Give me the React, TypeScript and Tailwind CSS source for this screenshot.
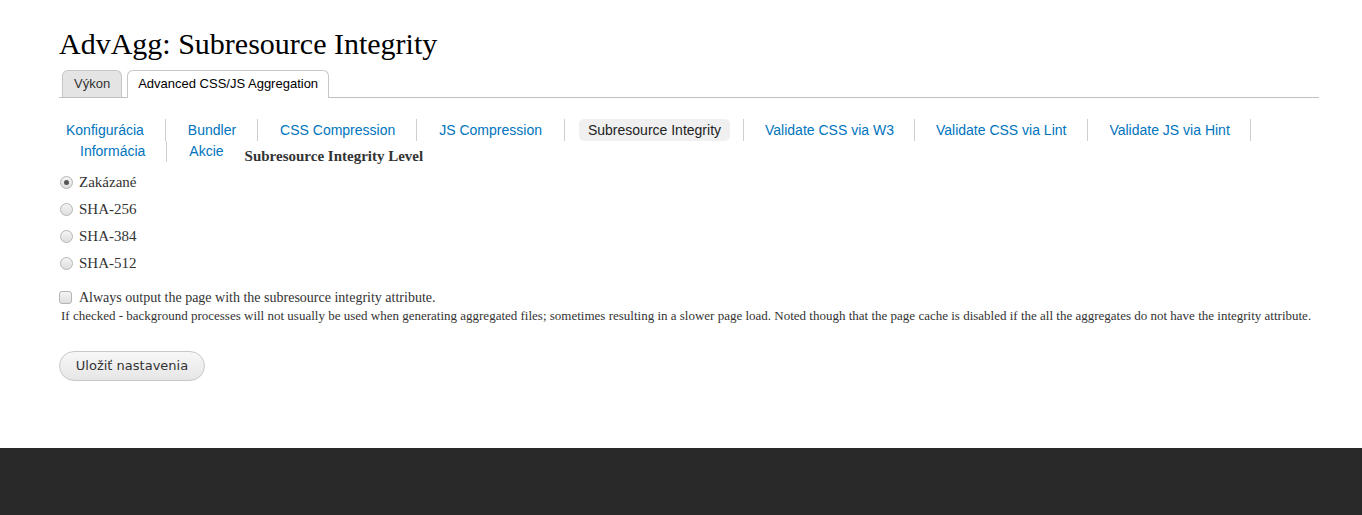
import React from "react";

const serif = { fontFamily: '"Liberation Serif", Georgia, serif' };

function Radio({ checked, label }: { checked?: boolean; label: string }) {
  return (
    <div className="flex items-center h-[27px]">
      <span className="w-[13px] h-[13px] rounded-full border border-[#b5b5b5] bg-gradient-to-b from-[#f4f4f4] to-[#dedede] flex items-center justify-center ml-[1px]">
        {checked && <span className="w-[5px] h-[5px] rounded-full bg-[#555]" />}
      </span>
      <span className="ml-[6px] text-[15px] text-[#333]">{label}</span>
    </div>
  );
}

export default function App() {
  const row1 = [
    { t: "Konfigurácia", pl: 7, pr: 21 },
    { t: "Bundler", pl: 22, pr: 21 },
    { t: "CSS Compression", pl: 22, pr: 21 },
    { t: "JS Compression", pl: 22, pr: 22 },
    { t: "Subresource Integrity", pl: 14, pr: 14, active: true },
    { t: "Validate CSS via W3", pl: 21, pr: 20 },
    { t: "Validate CSS via Lint", pl: 21, pr: 21 },
    { t: "Validate JS via Hint", pl: 21, pr: 20 },
  ];
  return (
    <div className="min-h-[515px] flex flex-col bg-white" style={serif}>
      <div className="pl-[59px] pr-[43px] pt-[27px] flex-1">
        <h1 className="text-[30px] leading-[34px] text-[#000] font-normal">AdvAgg: Subresource Integrity</h1>
        <div
          className="mt-[9px] flex items-end h-[28px] border-b border-[#bfbfbf] pl-[3px] gap-[5px] text-[13px]"
          style={{ fontFamily: '"Liberation Sans", Arial, sans-serif' }}
        >
          <div className="h-[27px] px-[11px] flex items-center bg-[#e4e4e4] border border-b-0 border-[#c6c6c6] rounded-t-[6px] text-[#333]">
            Výkon
          </div>
          <div className="h-[28px] px-[10px] flex items-center bg-white border border-b-0 border-[#c6c6c6] rounded-t-[6px] text-[#000] mb-[-1px] pb-[1px]">
            Advanced CSS/JS Aggregation
          </div>
        </div>

        <div className="mt-[21px] text-[14px]" style={{ fontFamily: '"Liberation Sans", Arial, sans-serif' }}>
          <div className="flex items-center h-[22px]">
            {row1.map((r, i) => (
              <div key={i} className="flex items-center h-[22px]">
                {r.active ? (
                  <span className="ml-[14px] px-[9px] h-[22px] flex items-center rounded-[5px] bg-[#f0f0f0] text-[#222]">
                    {r.t}
                  </span>
                ) : (
                  <span className="text-[#0074bd]" style={{ paddingLeft: r.pl, paddingRight: r.pr }}>
                    {r.t}
                  </span>
                )}
                <span className={"w-px h-[22px] bg-[#cfcfcf] " + (r.active ? "ml-[13px]" : "")} />
              </div>
            ))}
          </div>
          <div className="flex items-center h-[21px]">
            <span className="pl-[21px] pr-[21px] text-[#0074bd]">Informácia</span>
            <span className="w-px h-[21px] bg-[#cfcfcf]" />
            <span className="pl-[22px] pr-[21px] text-[#0074bd]">Akcie</span>
            <span className="text-[15px] font-bold text-[#333] mt-[10px]" style={serif}>
              Subresource Integrity Level
            </span>
          </div>
        </div>

        <div className="mt-[7px] flex flex-col">
          <Radio checked label="Zakázané" />
          <Radio label="SHA-256" />
          <Radio label="SHA-384" />
          <Radio label="SHA-512" />
        </div>

        <div className="mt-[12px] flex items-center h-[16px]">
          <span className="w-[13px] h-[13px] rounded-[3px] border border-[#b5b5b5] bg-gradient-to-b from-[#f4f4f4] to-[#dedede]" />
          <span className="ml-[7px] text-[14px] text-[#333]">Always output the page with the subresource integrity attribute.</span>
        </div>
        <div className="mt-[2px] ml-[2px] text-[13px] text-[#333] leading-[18px] whitespace-nowrap">
          If checked - background processes will not usually be used when generating aggregated files; sometimes resulting in a slower page load. Noted though that the page cache is disabled if the all the aggregates do not have the integrity attribute.
        </div>

        <button
          className="mt-[26px] h-[30px] w-[146px] rounded-full border border-[#c8c8c8] bg-gradient-to-b from-[#f7f7f7] to-[#e6e6e6] text-[13px] text-[#333]"
          style={{ fontFamily: '"DejaVu Sans", Verdana, sans-serif' }}
        >
          Uložiť nastavenia
        </button>
      </div>
      <div className="h-[67px] bg-[#292929] mt-[67px]" />
    </div>
  );
}
